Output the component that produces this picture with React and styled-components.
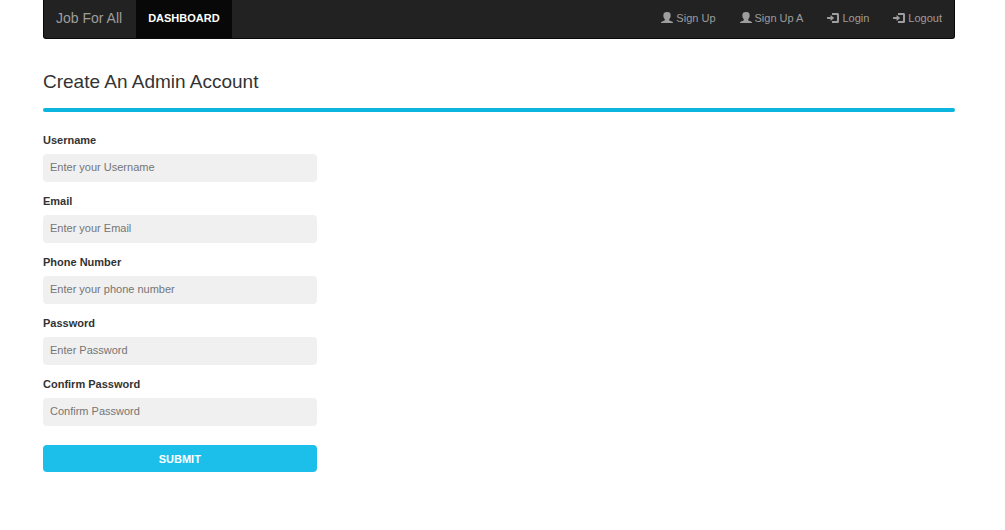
import React from "react";
import styled, { createGlobalStyle } from "styled-components";

const GlobalStyle = createGlobalStyle`
  *, *::before, *::after { box-sizing: border-box; }
  body {
    margin: 0;
    background: #fff;
    color: #333;
    font-family: "Liberation Sans", Arial, sans-serif;
    font-size: 11px;
    line-height: 16px;
  }
`;

const Page = styled.div`
  padding: 0 50px 58px 43px;
`;

const Navbar = styled.nav`
  display: flex;
  align-items: stretch;
  height: 39px;
  background: #222;
  border: 1px solid #080808;
  border-top: 0;
  border-radius: 0 0 3px 3px;
`;

const Brand = styled.a`
  display: flex;
  align-items: center;
  padding: 0 14px 2px 12px;
  color: #9d9d9d;
  font-size: 14px;
  text-decoration: none;
`;

const NavList = styled.ul`
  display: flex;
  margin: 0;
  margin-left: ${(p) => (p.$end ? "auto" : "0")};
  padding: 0;
  list-style: none;
`;

const NavLink = styled.a`
  display: flex;
  align-items: center;
  gap: 3px;
  height: 100%;
  padding: 0 12px 2px;
  color: ${(p) => (p.$active ? "#fff" : "#9d9d9d")};
  background: ${(p) => (p.$active ? "#080808" : "transparent")};
  font-weight: ${(p) => (p.$active ? "bold" : "normal")};
  text-decoration: none;
`;

const Icon = styled.svg`
  display: block;
  width: 12px;
  height: 12px;
  fill: currentColor;
`;

const Title = styled.h1`
  margin: 31px 0 14px;
  font-size: 19px;
  line-height: 24px;
  font-weight: normal;
`;

const Rule = styled.hr`
  height: 4px;
  margin: 0 0 20px;
  border: 0;
  border-radius: 2px;
  background: #0bb5de;
`;

const Form = styled.form`
  width: 30%;
`;

const Field = styled.div`
  display: flex;
  flex-direction: column;
  gap: 6px;
  margin-bottom: 11px;
`;

const Label = styled.label`
  color: #333;
  font-weight: bold;
`;

const Input = styled.input`
  width: 100%;
  height: 28px;
  padding: 0 7px 2px;
  border: 0;
  border-radius: 4px;
  background: #f0f0f0;
  color: #333;
  font: inherit;
  &::placeholder { color: #757575; opacity: 1; }
`;

const Submit = styled.button`
  width: 100%;
  height: 27px;
  margin-top: 8px;
  padding: 0;
  border: 0;
  border-radius: 4px;
  background: #1bbfe9;
  color: #fff;
  font: inherit;
  font-weight: bold;
  cursor: pointer;
`;

const UserIcon = () => (
  <Icon viewBox="0 0 12 12" aria-hidden="true">
    <path d="M6 0H6.4C8.7 0 9.6 1.1 9.6 3V4.2C9.6 5.4 9.1 6.3 8.2 7V7.9C8.2 8.3 8.5 8.5 9 8.7L10.9 9.4C11.7 9.7 12 10.1 12 10.7V11H0V10.7C0 10.1.3 9.7 1.1 9.4L3 8.7C3.5 8.5 3.8 8.3 3.8 7.9V7C2.9 6.3 2.4 5.4 2.4 4.2V3C2.4 1.1 3.5 0 6 0Z" />
  </Icon>
);

const LoginIcon = () => (
  <Icon viewBox="0 0 12 12" aria-hidden="true">
    <path d="M5 1H10.4C11.4 1 12 1.7 12 2.6V9.4C12 10.3 11.4 11 10.4 11H5V9H9.6C9.9 9 10 8.9 10 8.6V3.4C10 3.1 9.9 3 9.6 3H5Z" />
    <path d="M3.6 3L7.2 6L3.6 9V7H.5C.2 7 0 6.8 0 6.5V5.5C0 5.2.2 5 .5 5H3.6Z" />
  </Icon>
);

const accountLinks = [
  { text: "Sign Up", Glyph: UserIcon },
  { text: "Sign Up A", Glyph: UserIcon },
  { text: "Login", Glyph: LoginIcon },
  { text: "Logout", Glyph: LoginIcon },
];

const fields = [
  { id: "username", label: "Username", hint: "Enter your Username", type: "text" },
  { id: "email", label: "Email", hint: "Enter your Email", type: "email" },
  { id: "phone", label: "Phone Number", hint: "Enter your phone number", type: "tel" },
  { id: "password", label: "Password", hint: "Enter Password", type: "password" },
  { id: "confirm", label: "Confirm Password", hint: "Confirm Password", type: "password" },
];

export default function App() {
  return (
    <>
      <GlobalStyle />
      <Page>
        <Navbar>
          <Brand href="#">Job For All</Brand>
          <NavList>
            <li><NavLink href="#" $active>DASHBOARD</NavLink></li>
          </NavList>
          <NavList $end>
            {accountLinks.map(({ text, Glyph }) => (
              <li key={text}>
                <NavLink href="#"><Glyph />{text}</NavLink>
              </li>
            ))}
          </NavList>
        </Navbar>
        <main>
          <Title>Create An Admin Account</Title>
          <Rule />
          <Form onSubmit={(e) => e.preventDefault()}>
            {fields.map((f) => (
              <Field key={f.id}>
                <Label htmlFor={f.id}>{f.label}</Label>
                <Input id={f.id} name={f.id} type={f.type} placeholder={f.hint} />
              </Field>
            ))}
            <Submit type="submit">SUBMIT</Submit>
          </Form>
        </main>
      </Page>
    </>
  );
}
